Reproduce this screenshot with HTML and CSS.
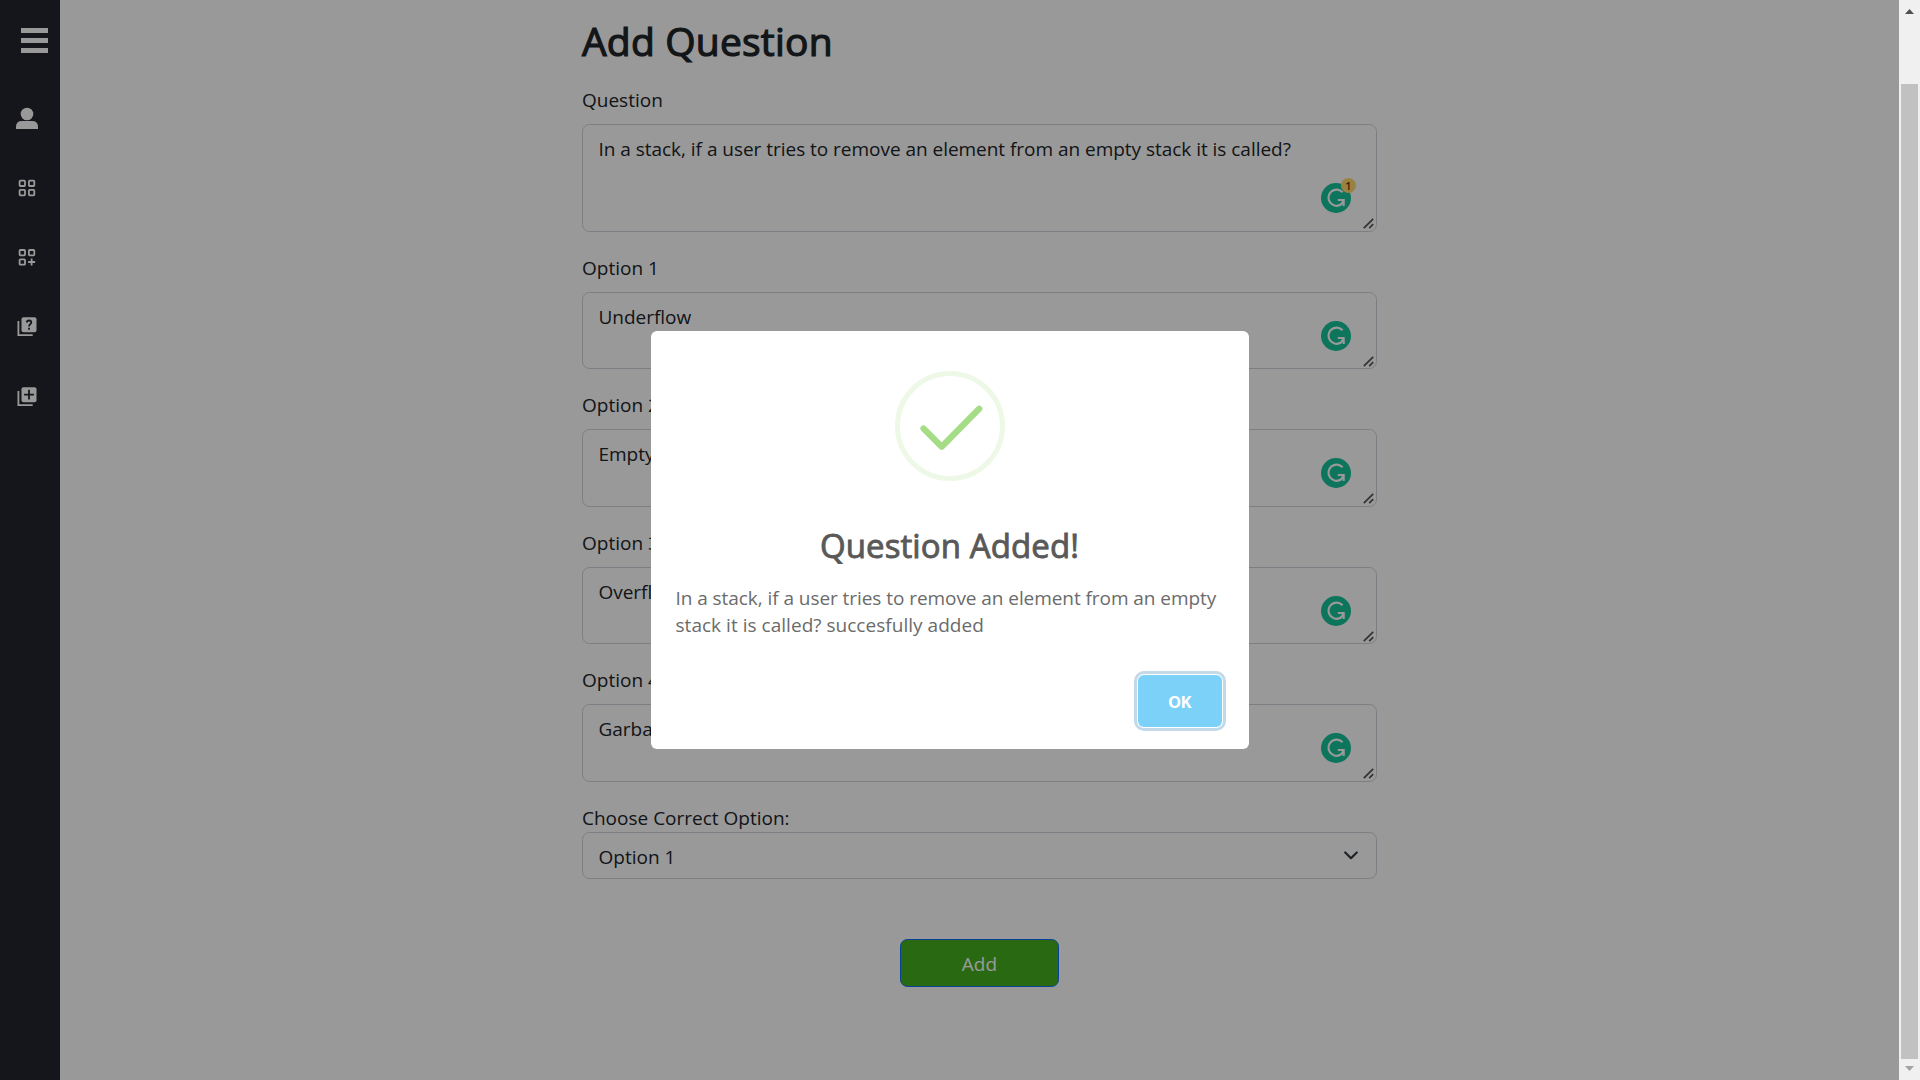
FILE: index.html
```html
<!DOCTYPE html>
<html lang="en">
<head>
<meta charset="utf-8">
<title>Add Question</title>
<link rel="stylesheet" href="styles.css">
</head>
<body>
<svg class="defs" width="0" height="0">
  <symbol id="assist" viewBox="0 0 30 30">
    <circle cx="15" cy="15" r="15" fill="#15c39a"/>
    <path d="M21.6 9.3A8.1 8.1 0 1 0 20 21.5L22 18.5M16.8 17h5.9v6" fill="none" stroke="#fff" stroke-width="2.1"/>
  </symbol>
  <symbol id="grip" viewBox="0 0 11 11">
    <path d="M.8 10.2L10.2.8M6.2 10.2l4-4" fill="none" stroke="#555" stroke-width="1.700"/>
  </symbol>
</svg>
<div class="page">
  <nav class="sidebar">
    <svg class="menu" viewBox="0 0 27 25"><path d="M0 0h27v5H0zM0 10h27v5H0zM0 20h27v5H0z"/></svg>
    <div class="links">
      <svg viewBox="0 0 22 22"><circle cx="11" cy="7" r="6.3"/><path d="M0 22v-2.4Q0 14 6 14h10q6 0 6 5.600V22z"/></svg>
      <svg viewBox="0 0 22 22"><g class="line"><rect x="3.600" y="3.600" width="5.400" height="5.400" rx=".8"/><rect x="12.900" y="3.600" width="5.400" height="5.400" rx=".8"/><rect x="3.600" y="12.900" width="5.400" height="5.400" rx=".8"/><rect x="12.900" y="12.900" width="5.400" height="5.400" rx=".8"/></g></svg>
      <svg viewBox="0 0 22 22"><g class="line"><rect x="3.600" y="4" width="5.400" height="5.400" rx=".8"/><rect x="12.900" y="4" width="5.400" height="5.400" rx=".8"/><rect x="3.600" y="13.300" width="5.400" height="5.400" rx=".8"/><path d="M15.600 12.500v7M12.100 16h7"/></g></svg>
      <svg viewBox="0 0 22 22"><rect x="5.500" y="1.200" width="15" height="15" rx="2"/><path class="line" d="M2.400 5v14.200h14.300"/><path class="cut" d="M10.700 6.500q.3-2 2.300-2 2.300 0 2.300 2c0 1.600-2.300 1.900-2.300 4M13 11.800v2"/></svg>
      <svg viewBox="0 0 22 22"><rect x="5.500" y="1.200" width="15" height="15" rx="2"/><path class="line" d="M2.400 5v14.200h14.300"/><path class="cut" d="M13 3.800v9.800M8.100 8.700h9.800"/></svg>
    </div>
  </nav>
  <main class="content">
    <form class="form">
      <h1 class="heading">Add Question</h1>
      <label class="label">Question</label>
      <div class="field tall"><span class="prompt">In a stack, if a user tries to remove an element from an empty stack it is called?</span><svg class="assist"><use href="#assist"/></svg><span class="count">1</span><svg class="grip"><use href="#grip"/></svg></div>
      <label class="label">Option 1</label>
      <div class="field">Underflow<svg class="assist"><use href="#assist"/></svg><svg class="grip"><use href="#grip"/></svg></div>
      <label class="label">Option 2</label>
      <div class="field">Empty<svg class="assist"><use href="#assist"/></svg><svg class="grip"><use href="#grip"/></svg></div>
      <label class="label">Option 3</label>
      <div class="field">Overflow<svg class="assist"><use href="#assist"/></svg><svg class="grip"><use href="#grip"/></svg></div>
      <label class="label">Option 4</label>
      <div class="field">Garbage<svg class="assist"><use href="#assist"/></svg><svg class="grip"><use href="#grip"/></svg></div>
      <label class="label choose">Choose Correct Option:</label>
      <div class="select"><span>Option 1</span><svg class="chevron" viewBox="0 0 14 9"><path d="M1.200 1.500L7 7.200l5.800-5.700"/></svg></div>
      <button class="add" type="button">Add</button>
    </form>
  </main>
</div>
<div class="overlay">
  <section class="modal" role="dialog">
    <svg class="success" viewBox="0 0 110 110"><circle cx="55" cy="55" r="52.500"/><path d="M28.500 57.500L46.700 75.700 84.200 37.700"/></svg>
    <h2 class="title">Question Added!</h2>
    <p class="message"><span class="first">In a stack, if a user tries to remove an element from an empty</span><br><span class="second">stack it is called? succesfully added</span></p>
    <button class="ok" type="button">OK</button>
  </section>
</div>
<div class="scrollbar">
  <svg class="arrow" viewBox="0 0 9 5"><path fill="#505050" d="M4.500 0L9 5H0z"/></svg>
  <div class="thumb"></div>
  <svg class="arrow" viewBox="0 0 9 5"><path fill="#a3a3a3" d="M0 0h9L4.500 5z"/></svg>
</div>
</body>
</html>
```

FILE: styles.css
```css
* { box-sizing: border-box; }
body { margin: 0; height: 1080px; overflow: hidden; font: 19px/30px "Open Sans", "Noto Sans", sans-serif; color: #212529; background: #fff; }
.defs { position: absolute; }
.page { display: flex; width: 1899px; height: 1080px; }
.sidebar { width: 60px; background: #23262d; padding-top: 28px; }
.sidebar svg { display: block; fill: #fff; }
.menu { width: 27px; height: 25px; margin-left: 21px; }
.links { display: flex; flex-direction: column; gap: 47.600px; margin: 54.300px 0 0 16px; }
.links svg { width: 22px; height: 22px; }
.sidebar .line { fill: none; stroke: #fff; stroke-width: 1.800; }
.sidebar .cut { fill: none; stroke: #23262d; stroke-width: 1.800; }
.content { flex: 1; display: flex; justify-content: center; }
.form { width: 795px; padding-top: 25.800px; display: flex; flex-direction: column; }
.heading { margin: 0 0 10px; height: 48px; font-size: 39px; font-weight: 400; line-height: 29px; letter-spacing: .2px; -webkit-text-stroke: 1.200px currentColor; white-space: nowrap; }
.label { height: 30px; margin-bottom: 10px; line-height: 32px; }
.label.choose { margin-bottom: 0; }
.field { position: relative; height: 77.500px; margin-bottom: 20px; padding: 9px 15.500px 0; border: 1px solid #ced4da; border-radius: 7.500px; white-space: nowrap; letter-spacing: -.03px; }
.field.tall { height: 108px; }
.assist { position: absolute; right: 25px; bottom: 17.500px; width: 30px; height: 30px; }
.grip { position: absolute; right: 2px; bottom: 1.800px; width: 11px; height: 11px; }
.count { position: absolute; right: 20px; bottom: 38px; width: 15px; height: 15px; border-radius: 50%; background: #ffd86e; color: #693200; font-size: 11px; font-weight: 600; line-height: 15px; text-align: center; }
.select { height: 47.500px; border: 1px solid #ced4da; border-radius: 7.500px; padding: 2px 18px 0 15.500px; display: flex; align-items: center; justify-content: space-between; }
.chevron { width: 14px; height: 9px; margin-top: -3px; fill: none; stroke: #343a40; stroke-width: 2.200; stroke-linecap: round; stroke-linejoin: round; }
.add { align-self: center; width: 159px; height: 47.500px; margin-top: 60px; padding: 2px 0 0; border: 1px solid #0d6efd; border-radius: 7.500px; background: #45b01f; color: #fff; font: inherit; }
.overlay { position: fixed; inset: 0 21px 0 0; background: rgba(0, 0, 0, .4); display: flex; align-items: center; justify-content: center; }
.modal { width: 598px; height: 418px; background: #fff; border-radius: 6px; display: flex; flex-direction: column; align-items: center; padding: 40px 25px 0; }
.success { width: 110px; height: 110px; fill: none; }
.success circle { stroke: #edf8e7; stroke-width: 5; }
.success path { stroke: #a5dc86; stroke-width: 6.200; stroke-linecap: round; stroke-linejoin: round; }
.title { margin: 44px 0 0; font-size: 33px; font-weight: 400; line-height: 42px; letter-spacing: .1px; -webkit-text-stroke: .9px currentColor; color: #595959; white-space: nowrap; }
.message { align-self: stretch; margin: 18px 0 0; font-size: 19px; line-height: 26.500px; color: #6b6b6b; white-space: nowrap; }
.first { letter-spacing: -.06px; }
.second { letter-spacing: .03px; }
.ok { align-self: flex-end; margin: 37px 2px 0; width: 84px; height: 52px; border: 0; border-radius: 6px; background: #7cd1f9; color: #fff; font: 700 16.500px "Open Sans", sans-serif; letter-spacing: -.5px; box-shadow: 0 0 0 1px #fff, 0 0 0 4px #c3d9e8; }
.scrollbar { position: fixed; inset: 0 0 0 auto; width: 21px; background: #f0f0f0; display: flex; flex-direction: column; align-items: center; padding-top: 9px; }
.thumb { width: 17px; height: 975px; margin: 70px 0 7px; background: #c1c1c1; }
.arrow { width: 9px; height: 5px; }
```
